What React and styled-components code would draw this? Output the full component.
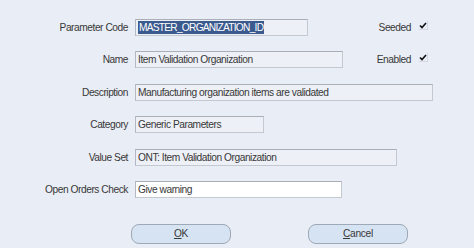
import React from 'react';
import styled, { createGlobalStyle } from 'styled-components';

const GlobalStyle = createGlobalStyle`
  html, body {
    margin: 0;
    padding: 0;
    background: #e9edf5;
  }
`;

const StyledWindow = styled.div`
  width: 474px;
  height: 248px;
  box-sizing: border-box;
  padding-top: 19px;
  background: #e9edf5;
  font-family: 'Liberation Sans', Arial, sans-serif;
  font-size: 10.2px;
  letter-spacing: -0.45px;
  color: #383838;
  overflow: hidden;
`;

const StyledForm = styled.div`
  width: 433px;
  display: grid;
  grid-template-columns: 128px 1fr;
  column-gap: 7px;
  row-gap: 15.4px;
  grid-auto-rows: 17px;
`;

const StyledLabel = styled.div`
  display: flex;
  align-items: center;
  justify-content: flex-end;
  white-space: nowrap;
`;

const StyledCell = styled.div`
  display: flex;
  align-items: center;
  justify-content: space-between;
`;

const StyledField = styled.div`
  width: ${({ width }) => width}px;
  height: 17px;
  box-sizing: border-box;
  display: flex;
  align-items: center;
  padding-left: 2px;
  border: 1px solid #c3c8d1;
  border-top-color: #a9aeb8;
  border-left-color: #b3b8c2;
  background: ${({ editable }) => (editable ? '#ffffff' : '#edf0f6')};
  white-space: nowrap;
  overflow: hidden;
`;

const StyledSelected = styled.span`
  background: #3b5a8e;
  color: #ffffff;
  padding: 0 1px;
  line-height: 13px;
  letter-spacing: -0.75px;
`;

const StyledFlag = styled.div`
  display: flex;
  align-items: center;
  gap: 8px;
  margin-right: 5px;
`;

const StyledCheck = styled.span`
  width: 8px;
  height: 8px;
  display: inline-flex;
  align-items: center;
  justify-content: center;
  border-right: 1px solid #d4d8df;
  border-bottom: 1px solid #d4d8df;
  margin-top: -4px;
`;

const StyledButtons = styled.div`
  display: flex;
  gap: 77px;
  padding-left: 131px;
  margin-top: 26px;
`;

const StyledButton = styled.button`
  width: 100px;
  height: 20px;
  box-sizing: border-box;
  border: 1px solid #9ea8b6;
  border-radius: 8px;
  background: #d6e3f2;
  font-family: inherit;
  font-size: 10.2px;
  letter-spacing: -0.3px;
  color: #383838;
  padding: 0;
  cursor: pointer;

  u {
    text-decoration: underline;
  }
`;

const Check = () => (
  <StyledCheck>
    <svg width="8" height="7" viewBox="0 0 8 7">
      <path d="M1 3.5 L3 5.6 L7 1" fill="none" stroke="#111" strokeWidth="1.6" />
    </svg>
  </StyledCheck>
);

const rows = [
  { label: 'Name', value: 'Item Validation Organization', width: 208, flag: 'Enabled' },
  { label: 'Description', value: 'Manufacturing organization items are validated', width: 298 },
  { label: 'Category', value: 'Generic Parameters', width: 129 },
  { label: 'Value Set', value: 'ONT: Item Validation Organization', width: 262 },
  { label: 'Open Orders Check', value: 'Give warning', width: 207, editable: true },
];

const App = () => (
  <>
    <GlobalStyle />
    <StyledWindow>
      <StyledForm>
        <StyledLabel>Parameter Code</StyledLabel>
        <StyledCell>
          <StyledField width={173}>
            <StyledSelected>MASTER_ORGANIZATION_ID</StyledSelected>
          </StyledField>
          <StyledFlag>
            Seeded
            <Check />
          </StyledFlag>
        </StyledCell>
        {rows.map((row) => (
          <React.Fragment key={row.label}>
            <StyledLabel>{row.label}</StyledLabel>
            <StyledCell>
              <StyledField width={row.width} editable={row.editable}>
                {row.value}
              </StyledField>
              {row.flag && (
                <StyledFlag>
                  {row.flag}
                  <Check />
                </StyledFlag>
              )}
            </StyledCell>
          </React.Fragment>
        ))}
      </StyledForm>
      <StyledButtons>
        <StyledButton>
          <u>O</u>K
        </StyledButton>
        <StyledButton>
          <u>C</u>ancel
        </StyledButton>
      </StyledButtons>
    </StyledWindow>
  </>
);

export default App;
